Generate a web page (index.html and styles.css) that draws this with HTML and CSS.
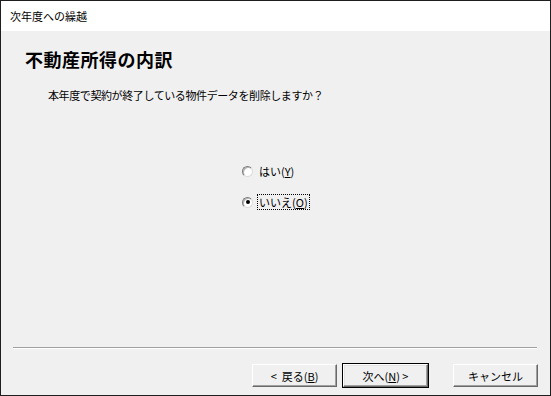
FILE: index.html
```html
<!DOCTYPE html>
<html lang="ja">
<head>
    <meta charset="UTF-8">
    <meta name="viewport" content="width=device-width, initial-scale=1.0">
    <title>次年度への繰越</title>
    <link rel="stylesheet" href="styles.css">
</head>
<body>

<div class="dialog">
    <div class="titlebar">次年度への繰越</div>

    <div class="content">
        <h1 class="heading">不動産所得の内訳</h1>
        <p class="question">本年度で契約が終了している物件データを削除しますか？</p>

        <div class="choices">
            <label class="choice">
                <span class="radio"></span>
                <span class="choice-text">はい(<u>Y</u>)</span>
            </label>
            <label class="choice">
                <span class="radio checked"></span>
                <span class="choice-text focused">いいえ(<u>O</u>)</span>
            </label>
        </div>

        <div class="separator"></div>

        <!-- ボタン列 -->
        <div class="buttons">
            <button class="btn" type="button">&lt;&nbsp; 戻る(<u>B</u>)</button>
            <button class="btn default" type="button">次へ(<u>N</u>) &gt;</button>
            <button class="btn cancel" type="button">キャンセル</button>
        </div>
    </div>
</div>

</body>
</html>
```

FILE: styles.css
```css
html, body {
    margin: 0;
    padding: 0;
}
body {
    font-family: "Noto Sans CJK JP", "Noto Sans", sans-serif;
    color: #000;
}
.dialog {
    width: 551px;
    height: 396px;
    box-sizing: border-box;
    border: 1px solid #1e1e1e;
    display: flex;
    flex-direction: column;
    background: #f0f0f0;
}
.titlebar {
    height: 30px;
    background: #fff;
    padding-left: 9px;
    font-size: 11px;
    line-height: 30px;
}
.content {
    flex: 1;
    display: flex;
    flex-direction: column;
}
.heading {
    margin: 16px 0 0 24px;
    font-size: 18px;
    line-height: 24px;
    font-weight: bold;
    letter-spacing: 0.5px;
}
.question {
    margin: 16px 0 0 47px;
    font-size: 11px;
    line-height: 16px;
    letter-spacing: -0.4px;
}
/* 選択肢 */
.choices {
    display: flex;
    flex-direction: column;
    gap: 15px;
    margin: 60px 0 0 241px;
}
.choice {
    display: flex;
    align-items: center;
    height: 16px;
    font-size: 11px;
}
.radio {
    width: 11px;
    height: 11px;
    box-sizing: border-box;
    border-radius: 50%;
    border: 1px solid;
    border-color: #7a7a7a #dcdcdc #dcdcdc #7a7a7a;
    background: #fff;
    box-shadow: inset 1px 1px 0 #b4b4b4;
    display: flex;
    align-items: center;
    justify-content: center;
}
.radio.checked::after {
    content: "";
    width: 4px;
    height: 4px;
    border-radius: 50%;
    background: #000;
}
.choice-text {
    margin-left: 4px;
    padding: 0 1px;
    line-height: 14px;
    border: 1px dotted transparent;
}
.choice-text.focused {
    border-color: #000;
}
.separator {
    margin: auto 13px 0 12px;
    border-top: 1px solid #a0a0a0;
    border-bottom: 1px solid #fff;
}
.buttons {
    display: flex;
    justify-content: flex-end;
    padding: 15px 12px 8px 0;
}
.btn {
    width: 85px;
    height: 23px;
    margin-left: 6px;
    padding: 0;
    font-family: inherit;
    font-size: 11px;
    color: #000;
    background: #f0f0f0;
    border: 1px solid;
    border-color: #fff #696969 #696969 #fff;
    box-shadow: inset -1px -1px 0 #a0a0a0;
}
.btn.default {
    outline: 1px solid #000;
    outline-offset: 0;
    box-shadow: inset -1px -1px 0 #a0a0a0, inset 1px 1px 0 #e3e3e3;
}
.btn.cancel {
    margin-left: 25px;
}
```
